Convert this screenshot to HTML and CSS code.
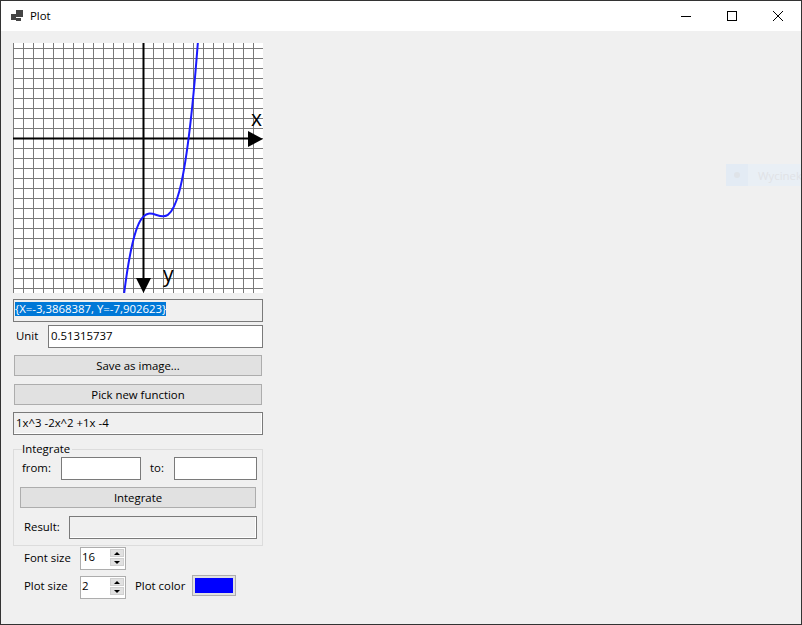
FILE: index.html
```html
<!DOCTYPE html>
<html lang="en">
<head>
    <meta charset="UTF-8">
    <meta name="viewport" content="width=device-width, initial-scale=1.0">
    <title>Plot</title>
    <link rel="stylesheet" href="styles.css">
</head>
<body>
    <div class="window">
        <div class="titlebar">
            <svg class="app-icon" width="14" height="12" viewBox="0 0 14 12">
                <rect x="0" y="4" width="5" height="6" fill="#444"></rect>
                <rect x="5" y="0" width="7" height="7" fill="#444"></rect>
                <rect x="5" y="8" width="5" height="3" fill="#444"></rect>
            </svg>
            <span class="title">Plot</span>
            <div class="controls">
                <div class="control">
                    <svg width="10" height="10" viewBox="0 0 10 10"><path d="M0 5.5H10" stroke="#000" fill="none"></path></svg>
                </div>
                <div class="control">
                    <svg width="10" height="10" viewBox="0 0 10 10"><rect x="0.5" y="0.5" width="9" height="9" stroke="#000" fill="none"></rect></svg>
                </div>
                <div class="control">
                    <svg width="10" height="10" viewBox="0 0 10 10"><path d="M0 0L10 10M10 0L0 10" stroke="#000" fill="none"></path></svg>
                </div>
            </div>
        </div>

        <div class="content">
            <div class="panel">
                <svg class="plot" width="250" height="250" viewBox="0 0 250 250">
                    <defs>
                        <pattern id="grid" width="10" height="10" patternUnits="userSpaceOnUse" y="5">
                            <path d="M0.5 0V10M0 0.5H10" stroke="#7a7a7a" fill="none"></path>
                        </pattern>
                    </defs>
                    <rect width="250" height="250" fill="#fff"></rect>
                    <rect width="250" height="250" fill="url(#grid)"></rect>
                    <path d="M130.5 0V236M0 95.5H236" stroke="#000" stroke-width="2" fill="none"></path>
                    <path d="M235 88L250 96L235 104Z" fill="#000"></path>
                    <path d="M123 235L138 235L130.5 250Z" fill="#000"></path>
                    <path d="M111 251.4C137 43.5 163 355.3 189 -60.4" stroke="#1a1aff" stroke-width="2" fill="none"></path>
                    <text x="238" y="83" class="axis-label">x</text>
                    <text x="150" y="239" class="axis-label">y</text>
                </svg>

                <div class="box coords"><span class="selected">{X=-3,3868387, Y=-7,902623}</span></div>

                <div class="row unit-row">
                    <label class="unit-label">Unit</label>
                    <div class="box input unit-input">0.51315737</div>
                </div>

                <div class="btn save-btn">Save as image...</div>
                <div class="btn pick-btn">Pick new function</div>

                <div class="box readonly fn-box">1x^3 -2x^2 +1x -4</div>

                <fieldset class="group">
                    <legend>Integrate</legend>
                    <div class="row">
                        <label class="from-label">from:</label>
                        <div class="box input from-input"></div>
                        <label class="to-label">to:</label>
                        <div class="box input to-input"></div>
                    </div>
                    <div class="btn integrate-btn">Integrate</div>
                    <div class="row result-row">
                        <label class="result-label">Result:</label>
                        <div class="box readonly result-box"></div>
                    </div>
                </fieldset>

                <div class="row font-row">
                    <label class="opt-label">Font size</label>
                    <div class="spinner">
                        <span class="spin-value">16</span>
                        <div class="spin-btns">
                            <div class="spin-btn"><i class="up"></i></div>
                            <div class="spin-btn"><i class="down"></i></div>
                        </div>
                    </div>
                </div>

                <div class="row plot-row">
                    <label class="opt-label">Plot size</label>
                    <div class="spinner">
                        <span class="spin-value">2</span>
                        <div class="spin-btns">
                            <div class="spin-btn"><i class="up"></i></div>
                            <div class="spin-btn"><i class="down"></i></div>
                        </div>
                    </div>
                    <label class="color-label">Plot color</label>
                    <div class="color-btn"><div class="swatch"></div></div>
                </div>
            </div>
        </div>

        <div class="ghost">
            <div class="ghost-icon"><div class="ghost-dot"></div></div>
            <span class="ghost-text">Wycinek</span>
        </div>
    </div>
</body>
</html>
```

FILE: styles.css
```css
* {
    box-sizing: border-box;
}
body {
    margin: 0;
    font-family: 'Open Sans', 'Noto Sans', sans-serif;
    font-size: 11.4px;
    color: #000;
    overflow: hidden;
}
.window {
    position: relative;
    width: 802px;
    height: 625px;
    background-color: #f0f0f0;
    border: 1px solid #333;
    overflow: hidden;
}
.titlebar {
    display: flex;
    align-items: center;
    height: 30px;
    background-color: #fff;
}
.app-icon {
    margin-left: 10px;
    margin-top: -1px;
}
.title {
    margin-left: 5px;
    padding-bottom: 2px;
}
.controls {
    display: flex;
    margin-left: auto;
}
.control {
    display: flex;
    justify-content: center;
    align-items: center;
    width: 46px;
    height: 30px;
}
.content {
    padding: 12px 0 0 12px;
}
.panel {
    display: flex;
    flex-direction: column;
    width: 250px;
}
.plot {
    display: block;
}
.axis-label {
    font-family: 'Open Sans', sans-serif;
    font-size: 21px;
}
.row {
    display: flex;
    align-items: center;
}
.row label {
    padding-bottom: 2px;
}
.box {
    display: flex;
    align-items: center;
    height: 23px;
    padding: 0 0 2px 2px;
    border: 1px solid #7a7a7a;
}
.input {
    background-color: #fff;
}
.readonly {
    background-color: #f0f0f0;
    box-shadow: inset -1px -1px 0 #fff;
}
.coords {
    align-items: flex-start;
    margin-top: 6px;
    padding: 2px 0 0 1px;
    background-color: #f0f0f0;
}
.selected {
    background-color: #0078d7;
    color: #fff;
    line-height: 14px;
}
.unit-row {
    margin-top: 3px;
}
.unit-label {
    margin-left: 3px;
}
.unit-input {
    width: 215px;
    margin-left: auto;
}
.btn {
    display: flex;
    justify-content: center;
    align-items: center;
    height: 21px;
    background-color: #e1e1e1;
    border: 1px solid #adadad;
}
.save-btn {
    margin: 7px 1px 0;
}
.pick-btn {
    margin: 8px 1px 0;
}
.fn-box {
    margin-top: 7px;
}
.group {
    height: 105px;
    min-width: 0;
    margin: 6px 0 0;
    padding: 0 5px 0 6px;
    border: 1px solid #dcdcdc;
}
.group legend {
    height: 16px;
    line-height: 16px;
    margin-left: 2px;
    padding: 0 2px 0 0;
}
.from-label {
    width: 39px;
    margin-left: 2px;
}
.from-input {
    width: 80px;
}
.to-label {
    width: 24px;
    margin-left: 9px;
}
.to-input {
    width: 83px;
}
.integrate-btn {
    margin: 7px 1px 0 0;
}
.result-row {
    margin-top: 8px;
}
.result-label {
    margin-left: 4px;
}
.result-box {
    width: 188px;
    margin-left: auto;
}
.font-row {
    margin-top: 1px;
}
.plot-row {
    margin-top: 6px;
}
.opt-label {
    width: 56px;
    margin-left: 11px;
}
.plot-row label {
    padding-bottom: 4px;
}
.spinner {
    display: flex;
    justify-content: space-between;
    width: 46px;
    height: 23px;
    padding: 1px;
    background-color: #fff;
    border: 1px solid #adadad;
}
.spin-value {
    line-height: 16px;
}
.spin-btns {
    display: flex;
    flex-direction: column;
    gap: 1px;
    width: 14px;
}
.spin-btn {
    display: flex;
    justify-content: center;
    align-items: center;
    height: 8px;
    background-color: #e1e1e1;
    border: 1px solid #d0d0d0;
}
.spin-btn i {
    width: 0;
    height: 0;
    border-left: 3px solid transparent;
    border-right: 3px solid transparent;
}
.spin-btn .up {
    border-bottom: 3px solid #000;
}
.spin-btn .down {
    border-top: 3px solid #000;
}
.color-label {
    width: 57px;
    margin-left: 9px;
}
.color-btn {
    align-self: flex-start;
    width: 44px;
    height: 21px;
    margin-top: -1px;
    padding: 2px;
    background-color: #e1e1e1;
    border: 1px solid #adadad;
}
.swatch {
    height: 15px;
    background-color: #0000ff;
}
.ghost {
    position: absolute;
    left: 725px;
    top: 163px;
    display: flex;
    align-items: center;
    width: 90px;
    height: 22px;
    background-color: #e9eff5;
}
.ghost-icon {
    display: flex;
    justify-content: center;
    align-items: center;
    width: 22px;
    height: 22px;
    background-color: #e3ebf4;
}
.ghost-dot {
    width: 6px;
    height: 6px;
    border-radius: 50%;
    background-color: #dfe3e8;
}
.ghost-text {
    margin-left: 10px;
    color: #e0e2e6;
}
```
